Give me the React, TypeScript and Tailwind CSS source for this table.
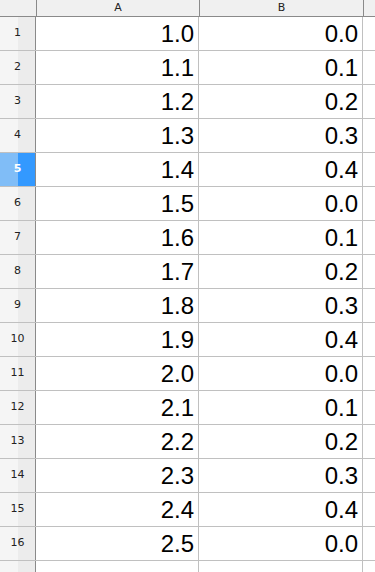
const rows: [string, string][] = [
  ['1.0', '0.0'],
  ['1.1', '0.1'],
  ['1.2', '0.2'],
  ['1.3', '0.3'],
  ['1.4', '0.4'],
  ['1.5', '0.0'],
  ['1.6', '0.1'],
  ['1.7', '0.2'],
  ['1.8', '0.3'],
  ['1.9', '0.4'],
  ['2.0', '0.0'],
  ['2.1', '0.1'],
  ['2.2', '0.2'],
  ['2.3', '0.3'],
  ['2.4', '0.4'],
  ['2.5', '0.0'],
  ['', ''],
]

const selectedRow = 5

function RowHeader({ n }: { n: number }) {
  const selected = n === selectedRow
  return (
    <div className="relative flex h-full w-[36px] shrink-0 items-center justify-center border-r border-[#8a8a8a]">
      <div className="absolute inset-0 flex">
        <div className={selected ? 'w-[18px] bg-[#80bdf7]' : 'w-[18px] bg-[#f5f5f5]'} />
        <div className={selected ? 'flex-1 bg-[#3399ff]' : 'flex-1 bg-[#ececec]'} />
      </div>
      <span
        className={
          selected
            ? 'relative text-[11px] font-bold text-white'
            : 'relative text-[11px] text-[#222]'
        }
      >
        {n <= 16 ? n : ''}
      </span>
    </div>
  )
}

export default function App() {
  return (
    <div className="h-[572px] w-[375px] overflow-hidden bg-white font-['DejaVu_Sans',sans-serif]">
      {/* column headers */}
      <div className="flex h-[17px] border-b border-[#8a8a8a] bg-[#f0f0f0]">
        <div className="w-[37px] shrink-0 border-r border-[#8a8a8a]" />
        <div className="flex w-[163px] shrink-0 items-center justify-center border-r border-[#8a8a8a] text-[11px] text-[#222]">
          A
        </div>
        <div className="flex w-[164px] shrink-0 items-center justify-center border-r border-[#8a8a8a] text-[11px] text-[#222]">
          B
        </div>
        <div className="flex-1" />
      </div>

      {rows.map(([a, b], i) => (
        <div key={i} className="flex h-[34px] border-b border-[#c0c0c0]">
          <RowHeader n={i + 1} />
          <div className="flex w-[163px] shrink-0 items-center justify-end border-r border-[#c0c0c0] pr-[4px] pt-[1px] font-['Liberation_Sans',Arial,sans-serif] text-[24px] text-black">
            {a}
          </div>
          <div className="flex w-[164px] shrink-0 items-center justify-end border-r border-[#c0c0c0] pr-[4px] pt-[1px] font-['Liberation_Sans',Arial,sans-serif] text-[24px] text-black">
            {b}
          </div>
          <div className="flex-1" />
        </div>
      ))}
    </div>
  )
}
